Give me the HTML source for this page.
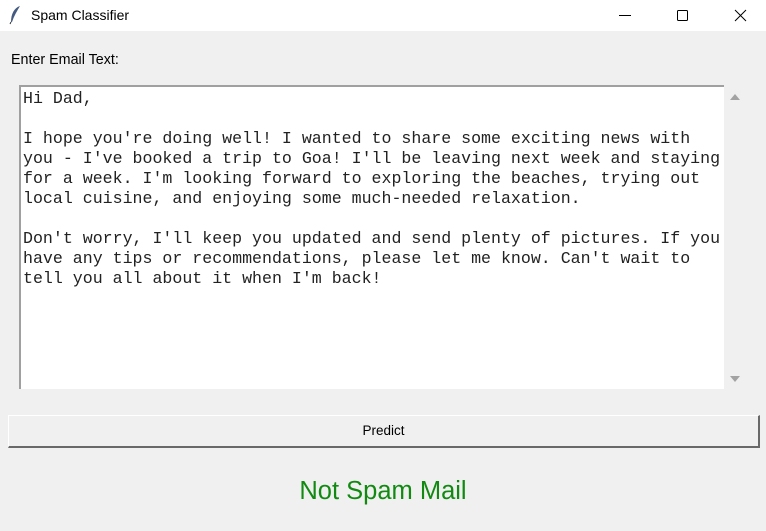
<!DOCTYPE html>
<html><head><style>
body{margin:0;width:766px;height:531px;background:#f0f0f0;position:relative;overflow:hidden;font-family:"Liberation Sans",sans-serif}
.tb{position:absolute;left:0;top:0;width:766px;height:31px;background:#fff}
.title{position:absolute;left:31px;top:7px;font-size:14px;color:#000}
.lbl{position:absolute;left:11px;top:52px;font-size:14.3px;color:#000}
.ta{position:absolute;left:19px;top:85px;width:705px;height:304px;background:#fff;border-top:2px solid #a0a0a0;border-left:2px solid #a0a0a0;box-sizing:border-box}
.ta pre{margin:0;position:absolute;left:2px;top:2px;font-family:"Liberation Mono",monospace;font-size:16.6px;line-height:20px;color:#222}
.btn{position:absolute;left:8px;top:415px;width:752px;height:33px;box-sizing:border-box;background:#f0f0f0;border-top:1px solid #fff;border-left:1px solid #fff;border-right:2px solid #696969;border-bottom:2px solid #696969;text-align:center;font-size:13.5px;line-height:30px}
.res{position:absolute;left:0;width:766px;top:477px;text-align:center;color:#128a12;font-size:25.5px}
</style></head><body>
<div class="tb">
<svg style="position:absolute;left:8px;top:5px" width="14" height="20" viewBox="0 0 14 20"><path d="M12 1 C6 3 3 9 3 17 L4 17 C6 11 9 6 12 1Z" fill="#445a80"/><path d="M3 17 L2 19" stroke="#333" stroke-width="1"/></svg>
<div class="title">Spam Classifier</div>
<svg style="position:absolute;left:616px;top:9px" width="140" height="14"><path d="M3 6.5H15" stroke="#000"/><rect x="61.5" y="1.5" width="10" height="10" rx="1" fill="none" stroke="#000"/><path d="M119 1L130 12M130 1L119 12" stroke="#000"/></svg>
</div>
<div class="lbl">Enter Email Text:</div>
<div class="ta"><pre>Hi Dad,

I hope you're doing well! I wanted to share some exciting news with
you - I've booked a trip to Goa! I'll be leaving next week and staying
for a week. I'm looking forward to exploring the beaches, trying out
local cuisine, and enjoying some much-needed relaxation.

Don't worry, I'll keep you updated and send plenty of pictures. If you
have any tips or recommendations, please let me know. Can't wait to
tell you all about it when I'm back!</pre></div>
<svg style="position:absolute;left:728px;top:92px" width="14" height="292"><path d="M2 8L7 2L12 8Z" fill="#a3a3a3"/><path d="M2 284L7 290L12 284Z" fill="#a3a3a3"/></svg>
<div class="btn">Predict</div>
<div class="res">Not Spam Mail</div>
</body></html>
